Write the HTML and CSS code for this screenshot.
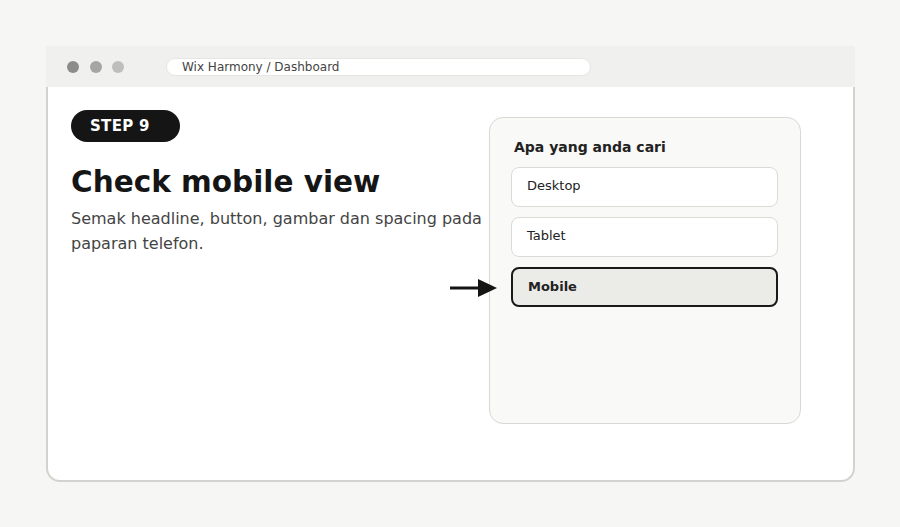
FILE: index.html
```html
<!DOCTYPE html>
<html>
<head>
<meta charset="utf-8">
<link rel="stylesheet" href="styles.css">
</head>
<body>
<div class="window">
  <div class="topbar">
    <div class="dots">
      <span class="dot d1"></span><span class="dot d2"></span><span class="dot d3"></span>
    </div>
    <div class="url">Wix Harmony / Dashboard</div>
  </div>
  <div class="content">
    <div class="left">
      <div class="pill">STEP 9</div>
      <h1 class="title">Check mobile view</h1>
      <p class="desc">Semak headline, button, gambar dan spacing pada paparan telefon.</p>
    </div>
    <div class="card">
      <div class="card-title">Apa yang anda cari</div>
      <div class="option">Desktop</div>
      <div class="option">Tablet</div>
      <div class="option selected">Mobile</div>
      <svg class="arrow" width="48" height="20" viewBox="0 0 48 20">
        <rect x="0" y="8.5" width="32" height="3" fill="#151515"/>
        <polygon points="28,1 47,10 28,19" fill="#151515"/>
      </svg>
    </div>
  </div>
</div>
</body>
</html>
```
FILE: styles.css
```css
* { box-sizing: border-box; }
body {
  margin: 0;
  background: #f6f6f4;
  font-family: "DejaVu Sans", sans-serif;
  width: 900px;
  height: 527px;
  overflow: hidden;
}
.window {
  margin: 46px 0 0 46px;
  width: 809px;
  height: 436px;
  background: #ffffff;
  border: 2px solid #d2d2cf;
  border-top: none;
  border-radius: 0 0 14px 14px;
  display: flex;
  flex-direction: column;
}
.topbar {
  height: 41px;
  margin: 0 -2px;
  background: #f0f0ee;
  display: flex;
  align-items: center;
  padding-left: 21px;
}
.dots { display: flex; gap: 10.5px; }
.dot { width: 12px; height: 12px; border-radius: 50%; display: block; }
.d1 { background: #8c8c8b; }
.d2 { background: #a5a5a4; }
.d3 { background: #bebebd; }
.url {
  margin-left: 42px;
  width: 425px;
  height: 18px;
  border-radius: 9px;
  background: #ffffff;
  border: 1px solid #e6e6e4;
  font-size: 12px;
  color: #444;
  line-height: 16px;
  padding-left: 15px;
}
.content {
  display: flex;
  padding: 23px 0 0 23px;
}
.left { width: 418px; }
.pill {
  width: 109px;
  height: 32px;
  border-radius: 16px;
  background: #151515;
  color: #fff;
  font-weight: bold;
  font-size: 15px;
  line-height: 32px;
  padding-left: 19px;
  letter-spacing: 0.3px;
}
.title {
  margin: 22px 0 0;
  font-size: 29.5px;
  line-height: 36px;
  font-weight: bold;
  color: #151515;
}
.desc {
  margin: 7px 0 0;
  font-size: 16px;
  line-height: 24.5px;
  color: #444;
  width: 430px;
}
.card {
  position: relative;
  margin-top: 7px;
  width: 312px;
  height: 307px;
  background: #f9f9f7;
  border: 1px solid #d8d8d5;
  border-radius: 14px;
  padding: 20px 21px 0 21px;
  display: flex;
  flex-direction: column;
  gap: 10px;
}
.card-title {
  font-size: 14px;
  font-weight: bold;
  color: #222;
  padding-left: 3px;
  line-height: 18px;
  margin-bottom: 1px;
}
.option {
  height: 40px;
  width: 267px;
  flex-shrink: 0;
  background: #fff;
  border: 1.5px solid #dadad7;
  border-radius: 8px;
  font-size: 13px;
  color: #222;
  line-height: 36px;
  padding-left: 15px;
}
.option.selected {
  background: #ebebe8;
  border: 2px solid #1a1a1a;
  font-weight: bold;
  line-height: 35px;
  padding-left: 15px;
}
.arrow {
  position: absolute;
  left: -40px;
  top: 160px;
}
```
